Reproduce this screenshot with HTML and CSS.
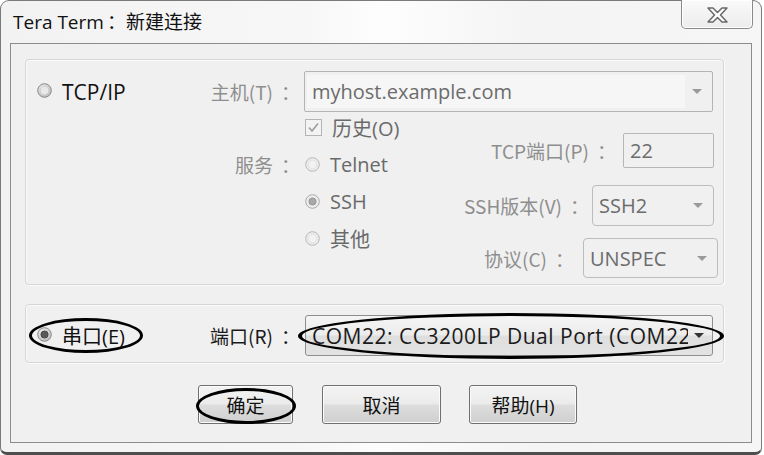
FILE: index.html
```html
<!DOCTYPE html>
<html lang="zh-CN">
<head>
<meta charset="utf-8">
<title>Tera Term：新建连接</title>
<link rel="stylesheet" href="styles.css">
</head>
<body>
<div class="window">
  <div class="titlebar">
    <span class="title">Tera Term<span class="colon">：</span>新建连接</span>
    <div class="close">
      <svg width="21" height="16" viewBox="0 0 21 16"><path d="M1 1 H6 L10.5 5.5 L15 1 H20 L13.5 8 L20 15 H15 L10.5 10.5 L6 15 H1 L7.5 8 Z" fill="#fdfdfd" stroke="#6a6a6a" stroke-width="1.5" stroke-linejoin="round"/></svg>
    </div>
  </div>
  <div class="client">
    <div class="group g1">
      <div class="row-host">
        <div class="lead">
          <span class="opt main">
            <svg class="radio" width="15" height="15" viewBox="0 0 15 15"><defs><radialGradient id="rg1" cx="40%" cy="35%" r="70%"><stop offset="0" stop-color="#f4f4f4"/><stop offset="1" stop-color="#b9b9b9"/></radialGradient></defs><circle cx="7.5" cy="7.5" r="6.8" fill="url(#rg1)" stroke="#8a8a8a" stroke-width="1"/><circle cx="7.5" cy="7.5" r="4.3" fill="#e9e9e9" stroke="#c8c8c8" stroke-width="0.8"/></svg>
            <span class="tcp">TCP/IP</span>
          </span>
          <span class="lbl dis">主机(T)<span class="colon">：</span></span>
        </div>
        <div class="combo host">
          <span class="field">myhost.example.com</span>
          <span class="arrow light"></span>
        </div>
      </div>
      <div class="lower">
        <div class="left">
          <div class="lrow">
            <span class="lbl"></span>
            <span class="opt dval">
              <svg class="check" width="17" height="17" viewBox="0 0 17 17"><rect x="0.5" y="0.5" width="16" height="16" fill="#f3f3f3" stroke="#b4b4b4"/><path d="M4 8.5 L7 12 L13 4.5" fill="none" stroke="#9d9d9d" stroke-width="1.6"/></svg>
              <span>历史(O)</span>
            </span>
          </div>
          <div class="lrow">
            <span class="lbl dis">服务<span class="colon">：</span></span>
            <span class="opt dval">
              <svg class="radio" width="15" height="15" viewBox="0 0 15 15"><circle cx="7.5" cy="7.5" r="6.8" fill="#ececec" stroke="#b8b8b8" stroke-width="1"/><circle cx="7.5" cy="7.5" r="4.3" fill="#f2f2f2" stroke="#dddddd" stroke-width="0.8"/></svg>
              <span>Telnet</span>
            </span>
          </div>
          <div class="lrow">
            <span class="lbl"></span>
            <span class="opt dval">
              <svg class="radio" width="15" height="15" viewBox="0 0 15 15"><circle cx="7.5" cy="7.5" r="6.8" fill="#ececec" stroke="#a9a9a9" stroke-width="1"/><circle cx="7.5" cy="7.5" r="3.6" fill="#a8a8a8" stroke="#8d8d8d" stroke-width="0.8"/></svg>
              <span>SSH</span>
            </span>
          </div>
          <div class="lrow">
            <span class="lbl"></span>
            <span class="opt dval">
              <svg class="radio" width="15" height="15" viewBox="0 0 15 15"><circle cx="7.5" cy="7.5" r="6.8" fill="#ececec" stroke="#b8b8b8" stroke-width="1"/><circle cx="7.5" cy="7.5" r="4.3" fill="#f2f2f2" stroke="#dddddd" stroke-width="0.8"/></svg>
              <span>其他</span>
            </span>
          </div>
        </div>
        <div class="right">
          <div class="rrow r-port">
            <span class="lbl dis">TCP端口(P)<span class="colon">：</span></span>
            <div class="box port">22</div>
          </div>
          <div class="rrow r-ssh">
            <span class="lbl dis">SSH版本(V)<span class="colon">：</span></span>
            <div class="combo sel ssh"><span class="val">SSH2</span><span class="arrow light"></span></div>
          </div>
          <div class="rrow r-proto">
            <span class="lbl dis">协议(C)<span class="colon">：</span></span>
            <div class="combo sel proto"><span class="val">UNSPEC</span><span class="arrow light"></span></div>
          </div>
        </div>
      </div>
    </div>

    <div class="group g2">
      <div class="lead">
        <span class="opt main">
          <svg class="radio" width="15" height="15" viewBox="0 0 15 15"><defs><radialGradient id="rg2" cx="40%" cy="35%" r="70%"><stop offset="0" stop-color="#f4f4f4"/><stop offset="1" stop-color="#b9b9b9"/></radialGradient></defs><circle cx="7.5" cy="7.5" r="6.8" fill="url(#rg2)" stroke="#8a8a8a" stroke-width="1"/><circle cx="7.5" cy="7.5" r="3.6" fill="#5a5a5a" stroke="#3c3c3c" stroke-width="0.8"/></svg>
          <span>串口(E)</span>
        </span>
        <span class="lbl">端口(R)<span class="colon">：</span></span>
      </div>
      <div class="combo com">
        <span class="val">COM22: CC3200LP Dual Port (COM22)</span>
        <span class="arrow dark"></span>
      </div>
      <span class="mark m-serial"></span>
      <span class="mark m-port"></span>
    </div>

    <div class="buttons">
      <div class="btn b-ok">确定<span class="mark m-ok"></span></div>
      <div class="btn b-cancel">取消</div>
      <div class="btn b-help">帮助(H)</div>
    </div>
  </div>
</div>
</body>
</html>
```
FILE: styles.css
```css
* { box-sizing: border-box; }

body {
  margin: 0;
  width: 764px;
  height: 455px;
  overflow: hidden;
  background: #ffffff;
  font-family: "Open Sans", "Noto Sans CJK SC", sans-serif;
  color: #1a1a1a;
}

.window {
  width: 762px;
  height: 455px;
  border: 1px solid #7a7a7a;
  border-bottom: 3px solid #4e4e4e;
  border-radius: 9px 9px 7px 7px;
  background: linear-gradient(90deg, #f2f2f2 0%, #f7f7f7 40%, #fdfdfd 50%, #f4f4f4 70%, #f6f6f6 100%);
}

.titlebar {
  height: 42px;
  display: flex;
  align-items: flex-start;
}

.title {
  font-size: 19px;
  line-height: 22px;
  margin: 10px 0 0 12px;
  color: #111;
}

.title .colon { margin-left: 3px; }

.close {
  margin: -1px 8px 0 auto;
  width: 72px;
  height: 29px;
  border: 1px solid #8a8a8a;
  border-top: none;
  border-radius: 0 0 5px 5px;
  background: linear-gradient(#fafafa, #ececec);
  box-shadow: inset 0 0 0 1px #ffffff;
  display: flex;
  align-items: center;
  justify-content: center;
  padding-top: 1px;
}

.client {
  margin-left: 9px;
  width: 742px;
  height: 400px;
  border: 1px solid #8c8c8c;
  background: #f0f0f0;
  padding: 15px 0 0 14px;
}

.group {
  width: 699px;
  border: 1px solid #d6d6d6;
  border-radius: 4px;
  box-shadow: inset 1px 1px 0 #fbfbfb, 1px 1px 0 #fbfbfb;
}

.g1 {
  height: 226px;
  padding-top: 11px;
}

.row-host {
  display: flex;
  height: 41px;
}

.lead {
  width: 278px;
  flex: 0 0 278px;
  display: flex;
  align-items: center;
  justify-content: space-between;
  padding: 0 4px 0 11px;
}

.opt {
  display: flex;
  align-items: center;
  gap: 10px;
  font-size: 20px;
}

.opt.main { color: #111; }
.opt.main .radio { margin-top: -3px; }
.tcp { font-size: 21px; }

.lbl {
  font-family: "Noto Sans CJK SC", sans-serif;
  font-size: 19px;
  white-space: nowrap;
}

.lbl .colon { margin-left: 8px; }

.lbl.dis { color: #8e8e8e; }

.dval { color: #6a6a6a; }

.combo {
  display: flex;
  align-items: center;
  position: relative;
}

.combo.host {
  width: 409px;
  height: 41px;
  border: 1px solid #b4b4b4;
  border-radius: 2px;
  background: #f0f0f0;
  padding: 3px 0 3px 2px;
}

.combo.host .field {
  flex: 0 0 378px;
  height: 100%;
  background: #f6f6f6;
  color: #6c6c6c;
  font-size: 20px;
  display: flex;
  align-items: center;
  padding-left: 5px;
}

.arrow {
  width: 0;
  height: 0;
  border-left: 5px solid transparent;
  border-right: 5px solid transparent;
  border-top: 5px solid #9a9a9a;
  margin-left: auto;
  margin-right: 10px;
}

.arrow.dark { border-top-color: #333; }

.lower {
  display: flex;
  margin-top: -3px;
}

.lrow {
  display: flex;
  align-items: center;
  height: 37px;
}

.lrow .lbl {
  width: 278px;
  text-align: right;
  padding-right: 4px;
}

.lrow .opt { margin-left: 1px; }

.right {
  margin-left: auto;
  padding: 24px 9px 0 0;
  display: flex;
  flex-direction: column;
  align-items: flex-end;
}

.rrow {
  display: flex;
  align-items: center;
}

.r-port { margin-bottom: 17px; gap: 7px; }
.r-ssh { margin-bottom: 12px; gap: 3px; }
.r-proto { margin-right: -4px; gap: 9px; }

.box.port {
  width: 91px;
  height: 35px;
  border: 1px solid #b6b6b6;
  border-radius: 2px;
  background: #f0f0f0;
  color: #6c6c6c;
  font-size: 20px;
  display: flex;
  align-items: center;
  padding-left: 6px;
}

.combo.sel {
  border: 1px solid #bcbcbc;
  border-radius: 4px;
  background: #f0f0f0;
  color: #6c6c6c;
  font-size: 20px;
  padding-left: 6px;
}

.combo.ssh { width: 122px; height: 41px; }
.combo.proto { width: 135px; height: 40px; }

.g2 {
  position: relative;
  height: 59px;
  margin-top: 19px;
  display: flex;
  align-items: flex-start;
  padding-top: 10px;
}

.g2 .lead { height: 41px; }
.g2 .lead .lbl { color: #1a1a1a; }

.combo.com {
  margin-left: 1px;
  width: 408px;
  height: 41px;
  border: 1px solid #8e8e8e;
  border-radius: 3px;
  background: linear-gradient(#f5f5f5 0%, #ececec 48%, #dedede 52%, #e3e3e3 100%);
  font-size: 21px;
  letter-spacing: 0.5px;
  color: #1a1a1a;
  padding-left: 6px;
}

.combo.com .val {
  width: 376px;
  overflow: hidden;
  white-space: nowrap;
}

.combo.com .arrow { margin-right: 8px; }

.mark {
  position: absolute;
  border: 3px solid #000;
  border-radius: 50%;
  pointer-events: none;
}

.m-serial { left: 3px; top: 13px; width: 114px; height: 35px; }
.m-port { left: 272px; top: 8px; width: 426px; height: 46px; border-width: 3px 4px; }
.m-ok { left: -3px; top: 2px; width: 100px; height: 36px; }

.buttons {
  display: flex;
  gap: 28px;
  margin-top: 22px;
  padding-left: 173px;
}

.btn {
  position: relative;
  height: 39px;
  border: 1px solid #707070;
  border-radius: 3px;
  background: linear-gradient(#f3f3f3 0%, #ebebeb 48%, #dddddd 52%, #cfcfcf 100%);
  box-shadow: inset 0 0 0 1px #fbfbfb;
  font-size: 19px;
  display: flex;
  align-items: center;
  justify-content: center;
  color: #111;
}

.b-ok { width: 95px; }
.b-cancel { width: 119px; margin-left: 1px; }
.b-help { width: 108px; }
```
